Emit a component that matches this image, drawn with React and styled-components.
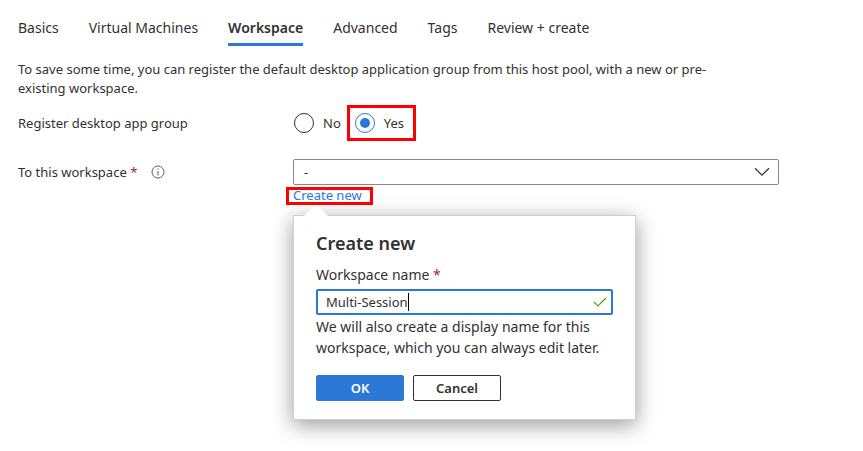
import React from "react";
import styled, { createGlobalStyle, css } from "styled-components";

const blue = "#2b78d7";
const ink = "#323130";
const red = "#ff0000";

const GlobalStyle = createGlobalStyle`
  *, *::before, *::after { box-sizing: border-box; }
  body {
    margin: 0;
    background: #fff;
    color: ${ink};
    font: 14px/20px "Noto Sans", "Open Sans", sans-serif;
  }
  input, select, button { font: inherit; color: inherit; }
`;

const Page = styled.main`
  min-height: 100vh;
  padding: 16px 84px 32px 18px;
`;

const Tabs = styled.nav`
  display: flex;
  gap: 30px;
`;

const Tab = styled.a`
  height: 30px;
  line-height: 24px;
  color: inherit;
  text-decoration: none;
  white-space: nowrap;
  border-bottom: 3px solid transparent;
  ${(p) =>
    p.$active &&
    css`
      font-weight: 600;
      border-bottom-color: ${blue};
    `}
`;

const Intro = styled.p`
  margin: 14px 0 0;
  max-width: 730px;
  font-size: 13px;
  line-height: 19px;
`;

const Row = styled.div`
  display: grid;
  grid-template-columns: 275px 1fr;
  align-items: start;
  font-size: 13px;
`;

const RadioRow = styled(Row)`
  margin-top: 7px;
  align-items: center;
`;

const SelectRow = styled(Row)`
  margin-top: 18px;
`;

const RowLabel = styled.div`
  display: flex;
  align-items: center;
  gap: 14px;
  min-height: 26px;
`;

const Required = styled.span`
  color: #a4262c;
`;

const Radios = styled.div`
  display: flex;
  align-items: center;
  gap: 6px;
`;

const RadioLabel = styled.label`
  display: flex;
  align-items: center;
  gap: 9px;
  height: 36px;
  border: ${(p) => (p.$marked ? `3px solid ${red}` : "0")};
  padding: ${(p) => (p.$marked ? "0 9px 0 5px" : "0 0 0 1px")};
`;

const Radio = styled.input`
  appearance: none;
  display: grid;
  place-items: center;
  width: 20px;
  height: 20px;
  margin: 0;
  border: 1px solid ${ink};
  border-radius: 50%;
  &:checked { border-color: ${blue}; }
  &:checked::before {
    content: "";
    width: 10px;
    height: 10px;
    border-radius: 50%;
    background: ${blue};
  }
`;

const SelectBox = styled.div`
  position: relative;
  svg {
    position: absolute;
    right: 9px;
    top: 8px;
    pointer-events: none;
  }
`;

const Select = styled.select`
  appearance: none;
  display: block;
  width: 100%;
  height: 26px;
  padding: 0 32px 0 10px;
  background: #fff;
  border: 1px solid #8a8886;
  border-radius: 2px;
`;

const Anchor = styled.div`
  position: relative;
  width: fit-content;
`;

const CreateLink = styled.a`
  display: block;
  line-height: 20px;
  color: ${blue};
  text-decoration: none;
  &::after {
    content: "";
    position: absolute;
    z-index: 2;
    inset: 2px -11px 0 -7px;
    border: 3px solid ${red};
  }
`;

const Popover = styled.form`
  position: absolute;
  z-index: 1;
  top: 30px;
  left: 0;
  width: 343px;
  padding: 13px 22px 18px;
  background: #fff;
  border: 1px solid #d2d0ce;
  box-shadow: 0 5px 20px rgba(0, 0, 0, 0.4);
  font-size: 14px;
  line-height: 21px;
`;

const Beak = styled.svg`
  position: absolute;
  left: 9px;
  top: -12px;
`;

const Title = styled.h2`
  margin: 0;
  font-size: 18px;
  line-height: 28px;
  font-weight: 600;
`;

const NameLabel = styled.label`
  display: block;
  margin: 7px 0 4px;
`;

const NameField = styled.div`
  display: flex;
  align-items: center;
  height: 26px;
  padding: 0 4px 0 8px;
  border: 2px solid ${blue};
  border-radius: 2px;
  font-size: 13px;
  svg { margin-left: auto; }
`;

const NameInput = styled.input`
  field-sizing: content;
  min-width: 0;
  padding: 0;
  border: 0;
  outline: 0;
  background: none;
  caret-color: transparent;
`;

const Caret = styled.span`
  width: 1px;
  height: 18px;
  background: #000;
`;

const Help = styled.p`
  margin: 1px 0 17px;
`;

const Actions = styled.div`
  display: flex;
  gap: 9px;
`;

const Button = styled.button`
  min-width: 88px;
  height: 26px;
  padding: 0 16px;
  border: 1px solid ${(p) => (p.$primary ? blue : ink)};
  border-radius: 2px;
  background: ${(p) => (p.$primary ? blue : "#fff")};
  color: ${(p) => (p.$primary ? "#fff" : ink)};
  font-size: 13px;
  line-height: 20px;
  font-weight: 600;
`;

const tabs = ["Basics", "Virtual Machines", "Workspace", "Advanced", "Tags", "Review + create"];

function InfoIcon() {
  return (
    <svg width="14" height="14" viewBox="0 0 14 14" fill="none" stroke="#605e5c" aria-hidden="true">
      <circle cx="7" cy="7" r="6" />
      <path d="M7 6v4.5" />
      <path d="M7 3.5v1.2" />
    </svg>
  );
}

export default function App() {
  return (
    <>
      <GlobalStyle />
      <Page>
        <Tabs>
          {tabs.map((name) => (
            <Tab key={name} href="#" $active={name === "Workspace"}>
              {name}
            </Tab>
          ))}
        </Tabs>
        <Intro>
          To save some time, you can register the default desktop application group from this host
          pool, with a new or pre-existing workspace.
        </Intro>
        <RadioRow role="radiogroup" aria-labelledby="register-label">
          <RowLabel id="register-label">Register desktop app group</RowLabel>
          <Radios>
            <RadioLabel>
              <Radio type="radio" name="register" value="no" />
              No
            </RadioLabel>
            <RadioLabel $marked>
              <Radio type="radio" name="register" value="yes" defaultChecked />
              Yes
            </RadioLabel>
          </Radios>
        </RadioRow>
        <SelectRow>
          <RowLabel>
            <label htmlFor="workspace">
              To this workspace <Required>*</Required>
            </label>
            <InfoIcon />
          </RowLabel>
          <div>
            <SelectBox>
              <Select id="workspace">
                <option>-</option>
              </Select>
              <svg width="16" height="10" viewBox="0 0 16 10" fill="none" stroke={ink} aria-hidden="true">
                <path d="M1 1.2l7 6.9 7-6.9" strokeWidth="1.2" />
              </svg>
            </SelectBox>
            <Anchor>
              <CreateLink href="#">Create new</CreateLink>
              <Popover onSubmit={(e) => e.preventDefault()}>
                <Beak width="26" height="13" viewBox="0 0 26 13" aria-hidden="true">
                  <path d="M0 13L13 0l13 13z" fill="#fff" />
                </Beak>
                <Title>Create new</Title>
                <NameLabel htmlFor="workspace-name">
                  Workspace name <Required>*</Required>
                </NameLabel>
                <NameField>
                  <NameInput id="workspace-name" defaultValue="Multi-Session" />
                  <Caret />
                  <svg width="14" height="10" viewBox="0 0 14 10" fill="none" stroke="#57a300" aria-hidden="true">
                    <path d="M1 5l4 4 8-8" strokeWidth="1.2" />
                  </svg>
                </NameField>
                <Help>
                  We will also create a display name for this workspace, which you can always edit
                  later.
                </Help>
                <Actions>
                  <Button type="submit" $primary>
                    OK
                  </Button>
                  <Button type="button">Cancel</Button>
                </Actions>
              </Popover>
            </Anchor>
          </div>
        </SelectRow>
      </Page>
    </>
  );
}
